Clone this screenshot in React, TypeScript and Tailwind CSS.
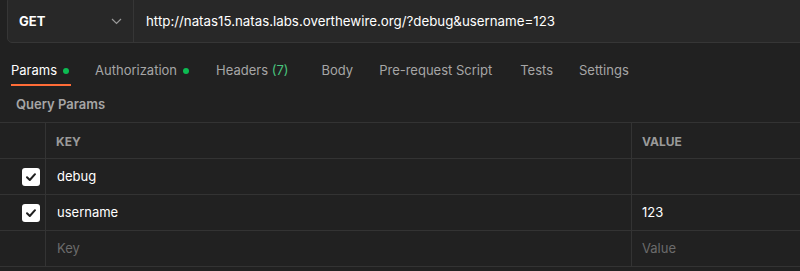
import React from "react";

function Check() {
  return (
    <div className="w-[18px] h-[18px] rounded-[3px] bg-white flex items-center justify-center">
      <svg width="12" height="12" viewBox="0 0 12 12" fill="none">
        <path d="M2 6.2 L4.8 9 L10 3.2" stroke="#1f1f1f" strokeWidth="2" strokeLinecap="round" strokeLinejoin="round" />
      </svg>
    </div>
  );
}

function Row({ checked, k, v, placeholder }: { checked?: boolean; k: string; v: string; placeholder?: boolean }) {
  const tc = placeholder ? "text-[#6b6b6b]" : "text-white";
  return (
    <div className="flex h-[36px] border-b border-[#333333]">
      <div className="w-[46px] shrink-0 border-r border-[#333333] flex items-center justify-end pr-[5px]">
        {checked ? <Check /> : null}
      </div>
      <div className={`w-[586px] shrink-0 border-r border-[#333333] flex items-center pl-[11px] text-[13px] ${tc}`}>{k}</div>
      <div className={`flex-1 flex items-center pl-[10px] text-[13px] ${tc}`}>{v}</div>
    </div>
  );
}

export default function App() {
  return (
    <div className="w-[800px] h-[271px] bg-[#212121] overflow-hidden" style={{ fontFamily: "Inter, 'Noto Sans', sans-serif" }}>
      <div className="pl-[7px]">
        <div className="-mt-[4px] h-[47px] w-[820px] flex rounded-[5px] border border-[#363636] bg-[#282828]">
          <div className="w-[126px] shrink-0 border-r border-[#363636] flex items-center justify-between pl-[11px] pr-[11px] pt-[4px]">
            <span className="text-white font-bold text-[13px]">GET</span>
            <svg width="11" height="7" viewBox="0 0 11 7" fill="none">
              <path d="M1 1 L5.5 5.5 L10 1" stroke="#9a9a9a" strokeWidth="1.2" />
            </svg>
          </div>
          <div className="flex items-center pl-[12px] pt-[4px] text-white text-[13.3px]">
            http://natas15.natas.labs.overthewire.org/?debug&amp;username=123
          </div>
        </div>
      </div>
      <div className="flex items-center h-[31px] mt-[12px] pl-[11px] text-[13px] text-[#a6a6a6]">
        <div className="relative h-full flex items-center text-white">
          Params
          <span className="ml-[6px] w-[6px] h-[6px] rounded-full bg-[#0cbb52]" />
          <span className="absolute left-0 right-[-2px] bottom-[0px] h-[2px] bg-[#ff6c37]" />
        </div>
        <div className="ml-[26px] flex items-center">
          Authorization
          <span className="ml-[6px] w-[6px] h-[6px] rounded-full bg-[#0cbb52]" />
        </div>
        <div className="ml-[27px]">
          Headers <span className="text-[#49c47e]">(7)</span>
        </div>
        <div className="ml-[33px]">Body</div>
        <div className="ml-[26px]">Pre-request Script</div>
        <div className="ml-[28px]">Tests</div>
        <div className="ml-[26px]">Settings</div>
      </div>
      <div className="h-[36px] flex items-center pl-[16px] pt-[2px] text-[13px] font-semibold text-[#a6a6a6]">Query Params</div>
      <div className="border-t border-[#333333]">
        <div className="flex h-[36px] border-b border-[#333333]">
          <div className="w-[46px] shrink-0 border-r border-[#333333]" />
          <div className="w-[586px] shrink-0 border-r border-[#333333] flex items-center pl-[10px] pt-[2px] text-[12px] font-bold text-[#9a9a9a]">KEY</div>
          <div className="flex-1 flex items-center pl-[10px] pt-[2px] text-[12px] font-bold text-[#9a9a9a]">VALUE</div>
        </div>
        <Row checked k="debug" v="" />
        <Row checked k="username" v="123" />
        <Row k="Key" v="Value" placeholder />
      </div>
    </div>
  );
}
